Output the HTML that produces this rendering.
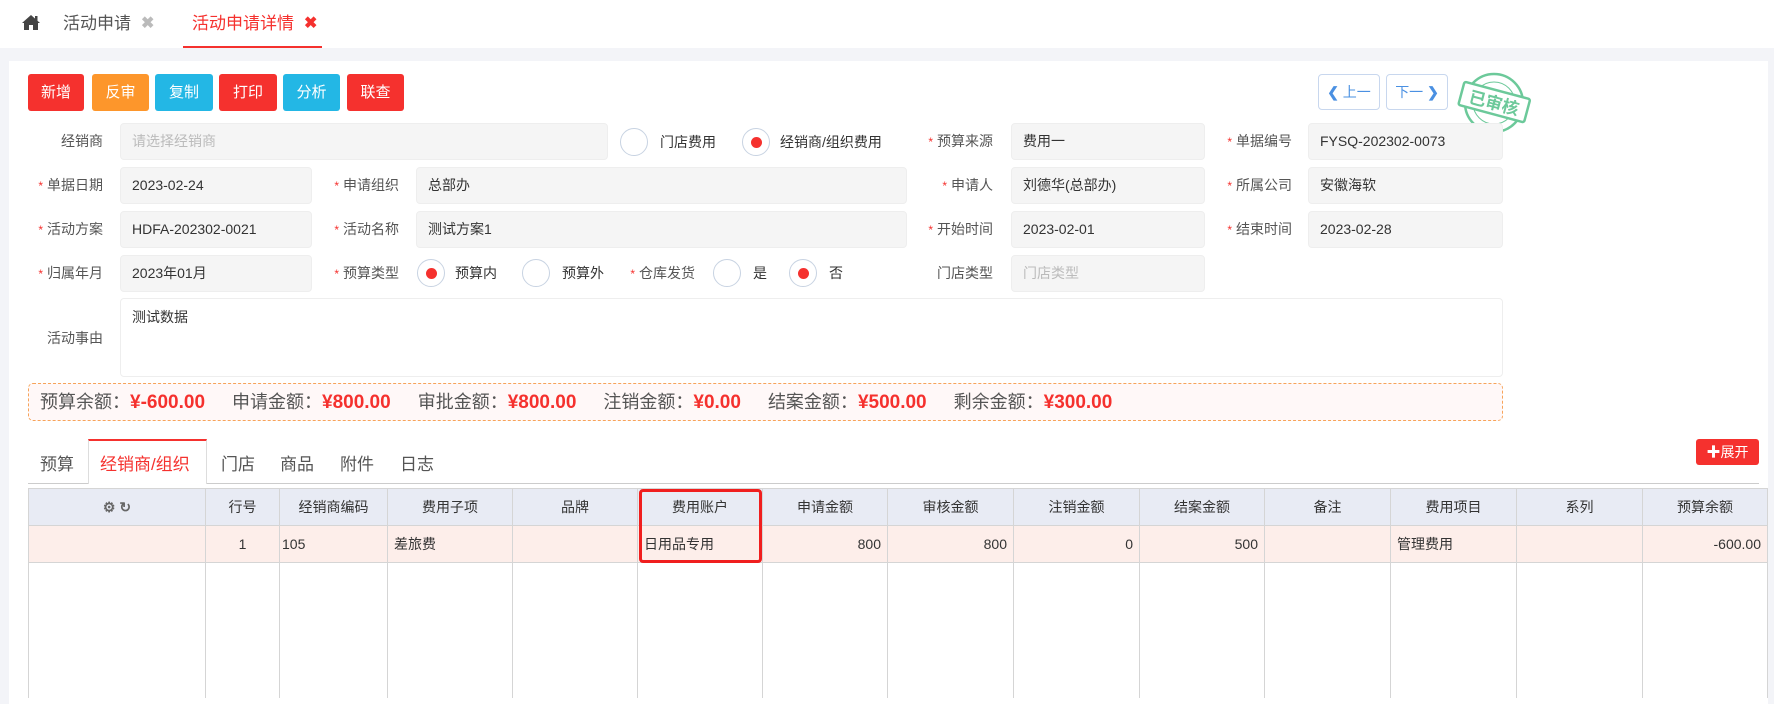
<!DOCTYPE html>
<html><head><meta charset="utf-8"><style>
*{box-sizing:border-box;margin:0;padding:0}
body{width:1774px;height:704px;overflow:hidden;background:#f3f4f8;font-family:"Liberation Sans","Noto Sans CJK SC",sans-serif;font-size:14px;color:#333;position:relative}
.a{position:absolute}
.top{left:0;top:0;width:1774px;height:48px;background:#fff}
.main{left:9px;top:61px;width:1759px;height:643px;background:#fff}
.btn{position:absolute;top:74px;height:37px;color:#fff;font-size:15px;line-height:37px;text-align:center;border-radius:3px}
.lbl{position:absolute;color:#555;font-size:14px;text-align:right;line-height:37px}
.lbl i{color:#f5312e;font-style:normal;margin-right:4px;font-size:12px}
.inp{position:absolute;height:37px;background:#f5f5f5;border:1px solid #eee;border-radius:4px;line-height:35px;padding-left:11px;font-size:14px;color:#333}
.ph{color:#bbb}
.rad{position:absolute;width:28px;height:28px;border:1px solid #c8d3e2;border-radius:50%;background:#fff}
.rad.on:after{content:"";position:absolute;left:8px;top:8px;width:11px;height:11px;border-radius:50%;background:#f5312e}
.rt{position:absolute;font-size:14px;line-height:28px;color:#333}
.sum{left:28px;top:383px;width:1475px;height:38px;border:1px dashed #f7a45a;border-radius:5px;background:#fff8f8;font-size:18px;line-height:36px;padding-left:11px;color:#555;white-space:nowrap}
.sum b{color:#f5312e;margin-right:27px;font-size:19px}
table{position:absolute;left:28px;top:488px;border-collapse:collapse;table-layout:fixed}
td{border:1px solid #d5d5d5;font-size:14px;overflow:hidden;white-space:nowrap}
tr.h td{background:#e8ebf4;height:37px;text-align:center;color:#333}
tr.d td{background:#fdeeea;height:37px;padding:0 6px}
tr.e td{height:135px;border-bottom:none}
.x{position:absolute;top:12px;line-height:24px;font-size:16px;font-weight:bold}
</style></head><body>
<div class="a top"></div>
<svg class="a" style="left:21px;top:14px" width="20" height="17" viewBox="0 0 20 17"><path d="M10 1 L1 9 L3 9 L3 16 L8 16 L8 11 L12 11 L12 16 L17 16 L17 9 L19 9 Z" fill="#444"/><rect x="14" y="2" width="2.5" height="5" fill="#444"/></svg>
<div class="a" style="left:63px;top:12px;font-size:17px;line-height:24px;color:#555">活动申请</div>
<div class="x" style="left:141px;color:#bbb">✖</div>
<div class="a" style="left:192px;top:12px;font-size:17px;line-height:24px;color:#f5312e">活动申请详情</div>
<div class="x" style="left:304px;color:#f5312e">✖</div>
<div class="a" style="left:183px;top:46px;width:139px;height:2px;background:#f5312e"></div>
<div class="a main"></div>

<div class="btn" style="left:28px;width:56px;background:#f5312e">新增</div>
<div class="btn" style="left:92px;width:57px;background:#fd962b">反审</div>
<div class="btn" style="left:155px;width:58px;background:#23b7e5">复制</div>
<div class="btn" style="left:219px;width:58px;background:#f5312e">打印</div>
<div class="btn" style="left:283px;width:57px;background:#23b7e5">分析</div>
<div class="btn" style="left:347px;width:57px;background:#f5312e">联查</div>

<div class="a" style="left:1318px;top:74px;width:62px;height:36px;border:1px solid #c8d7ee;border-radius:4px;color:#4a90e2;font-size:14px;line-height:34px;text-align:center"><b>❮</b> 上一</div>
<div class="a" style="left:1386px;top:74px;width:62px;height:36px;border:1px solid #c8d7ee;border-radius:4px;color:#4a90e2;font-size:14px;line-height:34px;text-align:center">下一 <b>❯</b></div>
<svg class="a" style="left:1452px;top:70px" width="84" height="66" viewBox="0 0 84 66"><g fill="none" stroke="#6cc99a"><circle cx="42" cy="33" r="29" stroke-width="2.5"/><circle cx="42" cy="33" r="21" stroke-width="1"/></g><g transform="rotate(15 42 33)"><rect x="8" y="20" width="68" height="24" fill="#fff" stroke="#6cc99a" stroke-width="2.5" rx="2"/><text x="42" y="39" text-anchor="middle" font-size="17" font-weight="bold" fill="#6cc99a" font-family="Noto Sans CJK SC,sans-serif">已审核</text></g></svg>

<div class="lbl" style="left:30px;top:123px;width:73px">经销商</div>
<div class="inp ph" style="left:120px;top:123px;width:488px">请选择经销商</div>
<div class="rad" style="left:620px;top:128px"></div><div class="rt" style="left:660px;top:128px">门店费用</div>
<div class="rad on" style="left:742px;top:128px"></div><div class="rt" style="left:780px;top:128px">经销商/组织费用</div>
<div class="lbl" style="left:900px;top:123px;width:93px"><i>*</i>预算来源</div>
<div class="inp" style="left:1011px;top:123px;width:194px">费用一</div>
<div class="lbl" style="left:1200px;top:123px;width:92px"><i>*</i>单据编号</div>
<div class="inp" style="left:1308px;top:123px;width:195px">FYSQ-202302-0073</div>

<div class="lbl" style="left:10px;top:167px;width:93px"><i>*</i>单据日期</div>
<div class="inp" style="left:120px;top:167px;width:192px">2023-02-24</div>
<div class="lbl" style="left:306px;top:167px;width:93px"><i>*</i>申请组织</div>
<div class="inp" style="left:416px;top:167px;width:491px">总部办</div>
<div class="lbl" style="left:900px;top:167px;width:93px"><i>*</i>申请人</div>
<div class="inp" style="left:1011px;top:167px;width:194px">刘德华(总部办)</div>
<div class="lbl" style="left:1200px;top:167px;width:92px"><i>*</i>所属公司</div>
<div class="inp" style="left:1308px;top:167px;width:195px">安徽海软</div>

<div class="lbl" style="left:10px;top:211px;width:93px"><i>*</i>活动方案</div>
<div class="inp" style="left:120px;top:211px;width:192px">HDFA-202302-0021</div>
<div class="lbl" style="left:306px;top:211px;width:93px"><i>*</i>活动名称</div>
<div class="inp" style="left:416px;top:211px;width:491px">测试方案1</div>
<div class="lbl" style="left:900px;top:211px;width:93px"><i>*</i>开始时间</div>
<div class="inp" style="left:1011px;top:211px;width:194px">2023-02-01</div>
<div class="lbl" style="left:1200px;top:211px;width:92px"><i>*</i>结束时间</div>
<div class="inp" style="left:1308px;top:211px;width:195px">2023-02-28</div>

<div class="lbl" style="left:10px;top:255px;width:93px"><i>*</i>归属年月</div>
<div class="inp" style="left:120px;top:255px;width:192px">2023年01月</div>
<div class="lbl" style="left:306px;top:255px;width:93px"><i>*</i>预算类型</div>
<div class="rad on" style="left:417px;top:259px"></div><div class="rt" style="left:455px;top:259px">预算内</div>
<div class="rad" style="left:522px;top:259px"></div><div class="rt" style="left:562px;top:259px">预算外</div>
<div class="lbl" style="left:610px;top:255px;width:85px"><i>*</i>仓库发货</div>
<div class="rad" style="left:713px;top:259px"></div><div class="rt" style="left:753px;top:259px">是</div>
<div class="rad on" style="left:789px;top:259px"></div><div class="rt" style="left:829px;top:259px">否</div>
<div class="lbl" style="left:900px;top:255px;width:93px">门店类型</div>
<div class="inp ph" style="left:1011px;top:255px;width:194px">门店类型</div>

<div class="lbl" style="left:30px;top:320px;width:73px">活动事由</div>
<div class="a" style="left:120px;top:298px;width:1383px;height:79px;border:1px solid #eee;border-radius:4px;padding:8px 11px;font-size:14px">测试数据</div>

<div class="a sum">预算余额：<b>¥-600.00</b>申请金额：<b>¥800.00</b>审批金额：<b>¥800.00</b>注销金额：<b>¥0.00</b>结案金额：<b>¥500.00</b>剩余金额：<b>¥300.00</b></div>

<div class="a" style="left:28px;top:483px;width:1731px;height:1px;background:#ccc"></div>
<div class="a" style="left:88px;top:439px;width:119px;height:45px;background:#fff;border:1px solid #ddd;border-top:2px solid #f5312e;border-bottom:none"></div>
<div class="a" style="left:40px;top:450px;font-size:17px;color:#555">预算</div>
<div class="a" style="left:100px;top:450px;font-size:17px;color:#f5312e">经销商/组织</div>
<div class="a" style="left:221px;top:450px;font-size:17px;color:#555">门店</div>
<div class="a" style="left:280px;top:450px;font-size:17px;color:#555">商品</div>
<div class="a" style="left:340px;top:450px;font-size:17px;color:#555">附件</div>
<div class="a" style="left:400px;top:450px;font-size:17px;color:#555">日志</div>
<div class="a" style="left:1696px;top:439px;width:63px;height:26px;background:#f5312e;border-radius:3px;color:#fff;font-size:14px;line-height:26px;text-align:center"><b>✚</b>展开</div>

<table>
<colgroup><col style="width:177px"><col style="width:74px"><col style="width:108px"><col style="width:125px"><col style="width:125px"><col style="width:125px"><col style="width:125px"><col style="width:126px"><col style="width:126px"><col style="width:125px"><col style="width:126px"><col style="width:126px"><col style="width:126px"><col style="width:125px"></colgroup>
<tr class="h"><td style="color:#666;font-weight:bold">⚙ ↻</td><td>行号</td><td>经销商编码</td><td>费用子项</td><td>品牌</td><td>费用账户</td><td>申请金额</td><td>审核金额</td><td>注销金额</td><td>结案金额</td><td>备注</td><td>费用项目</td><td>系列</td><td>预算余额</td></tr>
<tr class="d"><td></td><td style="text-align:center">1</td><td style="padding-left:2px">105</td><td>差旅费</td><td></td><td>日用品专用</td><td style="text-align:right">800</td><td style="text-align:right">800</td><td style="text-align:right">0</td><td style="text-align:right">500</td><td></td><td>管理费用</td><td></td><td style="text-align:right">-600.00</td></tr>
<tr class="e"><td></td><td></td><td></td><td></td><td></td><td></td><td></td><td></td><td></td><td></td><td></td><td></td><td></td><td></td></tr>
</table>
<div class="a" style="left:639px;top:489px;width:123px;height:74px;border:3px solid #f01e1e;border-radius:4px"></div>
</body></html>
